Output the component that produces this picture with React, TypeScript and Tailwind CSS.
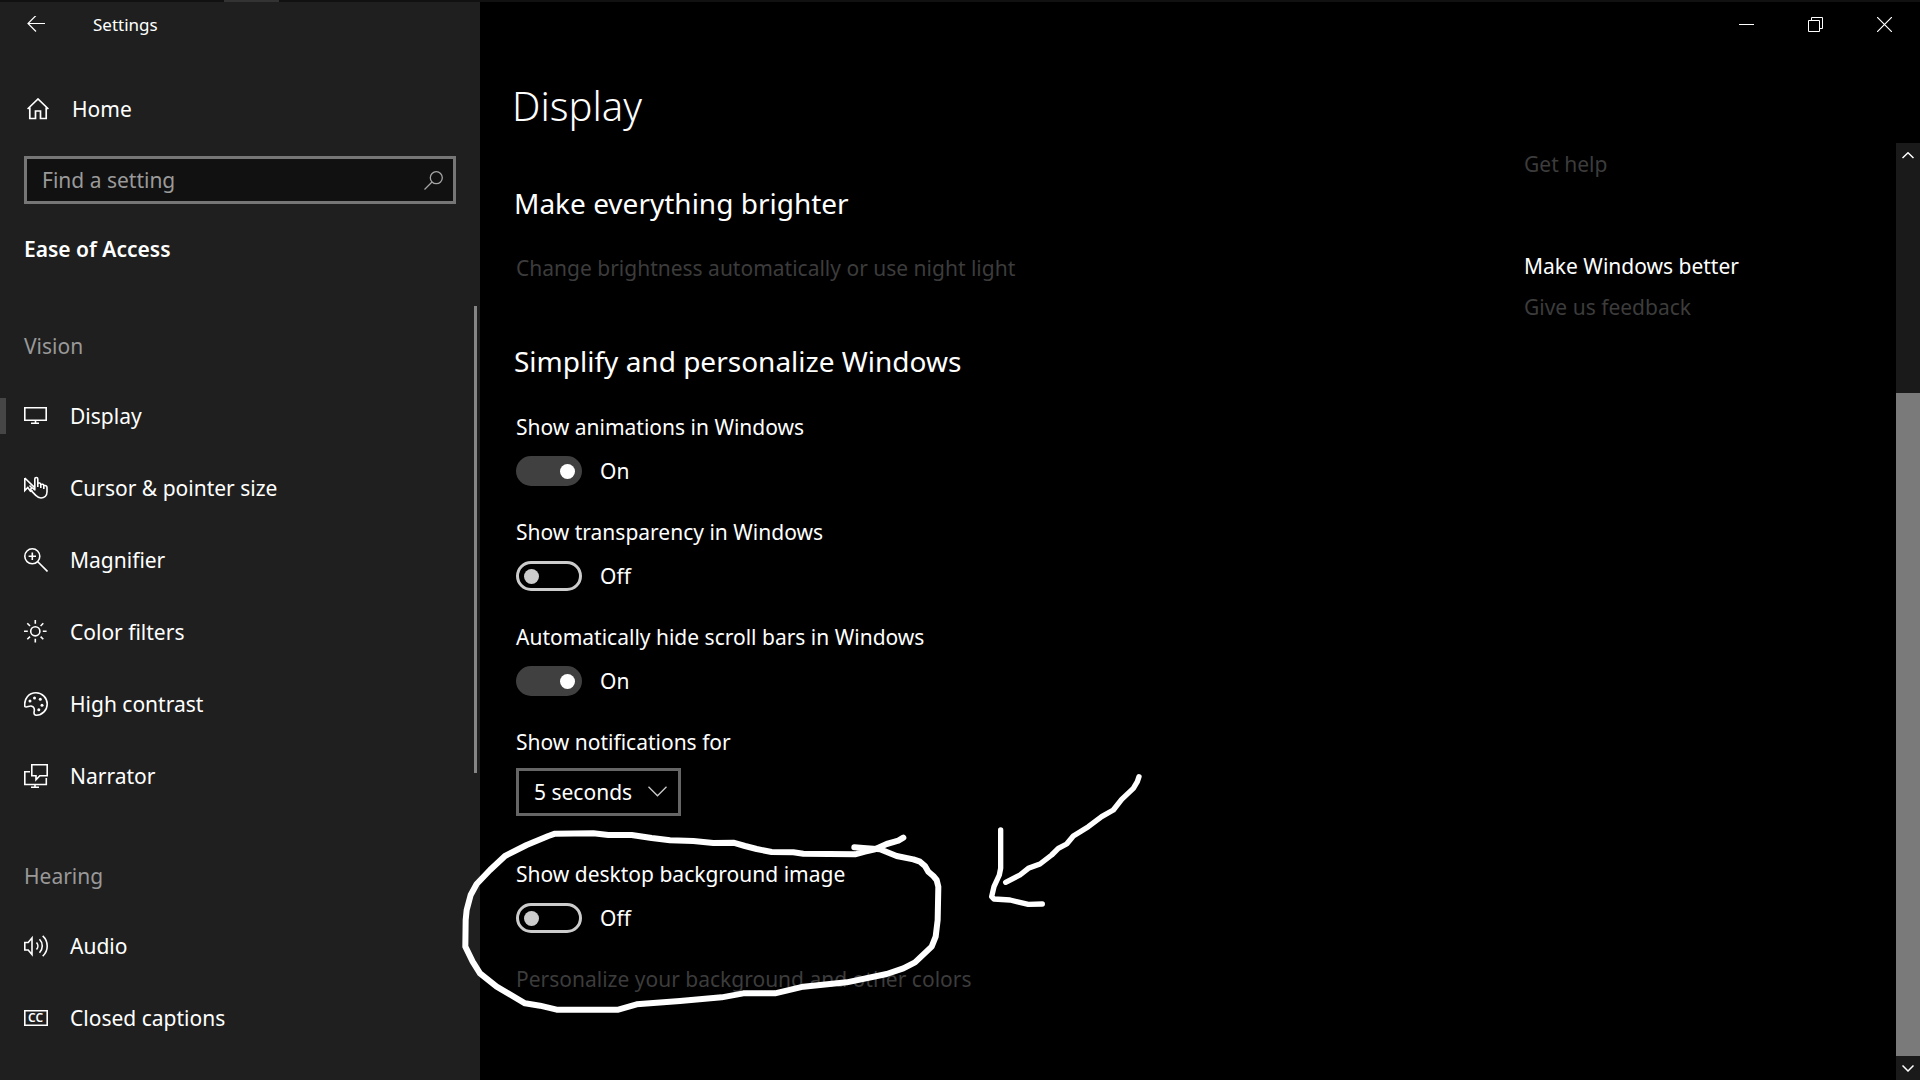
import { useState } from 'react';
import type { ReactNode } from 'react';

const icons: Record<string, ReactNode> = {
  display: (
    <>
      <path d="M.8 3.8h21.4v12.4H.8z" />
      <path d="M11.5 16v3M7 19.3h8" />
    </>
  ),
  cursor: (
    <>
      <path d="M.8 2v12.5l3-3 2.6 3.8 2-1.2M.8 2l9.6 9.4M5.5 9.5l2.8 2.8" />
      <path d="M10.8 14.5V3c0-2 3-2 3 0v8M13.8 7.5c1-.9 2.8-.6 3 .8V12M16.8 8.6c1.2-.8 2.9-.3 3 1V13M19.8 9.8c1.5-.6 3.2 0 3.2 1.8v4.2c0 4-2.8 6.2-6 6.2-2.4 0-3.8-1-5-2.4l-5-5.2c-1-1.8.8-3 2.2-2l1.6 1.5" />
    </>
  ),
  magnifier: (
    <>
      <circle cx="8.3" cy="8.3" r="7.5" />
      <path d="M13.8 13.8l9.7 9.7M8.3 4.6V12M4.6 8.3H12" />
    </>
  ),
  filters: (
    <>
      <circle cx="11.3" cy="11.3" r="4.6" />
      <path d="M11.3 0v3.8M11.3 18.8v3.8M0 11.3h3.8M18.8 11.3h3.8M3.3 3.3L6 6M16.6 16.6l2.7 2.7M19.3 3.3L16.6 6M6 16.6l-2.7 2.7" />
    </>
  ),
  contrast: (
    <>
      <path d="M.9 14.6C-.4 6.5 5 .8 12 .8c6.2 0 11.2 5 11.2 11.2S18.2 23.2 12.4 23.2c-1.9 0-2.7-1.4-2.3-3.3.6-2.7.2-5.2-2.6-5.8-2.4-.6-4.6 1.8-6.6.5z" />
      <g fill="currentColor" stroke="none">
        <circle cx="6" cy="9" r="1.5" />
        <circle cx="10.5" cy="5.9" r="1.5" />
        <circle cx="16.3" cy="7.3" r="1.5" />
        <circle cx="18" cy="13.2" r="1.5" />
        <circle cx="14.8" cy="17.8" r="1.5" />
      </g>
    </>
  ),
  narrator: (
    <>
      <path d="M7.8.8h15.4v11h-7.4L12 15.8v-4H7.8z" />
      <path d="M6 7.8H.8v12.7h21.5V14M11 20.5v3M7 23.3h8" />
    </>
  ),
  audio: (
    <>
      <path d="M.8 8.5h3.4L8 4v16.5L4.2 16H.8z" />
      <path d="M12.5 8.5c1.8 2 1.8 5 0 7M15.5 5.3c3.7 3.7 3.7 9.7 0 13.4M18.7 1.8c6 5.6 6 14.8 0 20.4" />
    </>
  ),
  captions: (
    <>
      <path d="M.8 4.8h22.4v14.5H.8z" />
      <text x="4" y="16" fontSize="12" fontWeight="600" fill="currentColor" stroke="none">
        CC
      </text>
    </>
  ),
};

const groups = [
  {
    title: 'Vision',
    items: [
      { icon: 'display', label: 'Display', active: true },
      { icon: 'cursor', label: 'Cursor & pointer size' },
      { icon: 'magnifier', label: 'Magnifier' },
      { icon: 'filters', label: 'Color filters' },
      { icon: 'contrast', label: 'High contrast' },
      { icon: 'narrator', label: 'Narrator' },
    ],
  },
  {
    title: 'Hearing',
    items: [
      { icon: 'audio', label: 'Audio' },
      { icon: 'captions', label: 'Closed captions' },
    ],
  },
];

function Sidebar() {
  return (
    <aside className="w-[480px] shrink-0 bg-[#1f1f1f] flex flex-col">
      <div className="h-[46px] flex items-center pl-[27px] gap-12">
        <button aria-label="Back">
          <svg width="18" height="18" viewBox="0 0 18 18" fill="none" stroke="currentColor" strokeWidth="1.2">
            <path d="M18 7.5H1M9 -.5l-8 8 8 8" />
          </svg>
        </button>
        <span className="text-[17px] leading-[24px]">Settings</span>
      </div>

      <a href="#home" className="mt-[46px] pl-[27px] flex items-center gap-[23px]">
        <svg width="22" height="22" viewBox="0 0 22 22" fill="none" stroke="currentColor" strokeWidth="1.7">
          <path d="M.6 11L11 1l10.4 10M2.8 9.5v11h5.7V13h5v7.5h5.7v-11" />
        </svg>
        Home
      </a>

      <div className="relative mt-8 mx-6">
        <input
          type="text"
          aria-label="Find a setting"
          placeholder="Find a setting"
          className="block w-full h-12 bg-[#111] border-3 border-[#767676] pl-[15px] pr-12 placeholder:text-[#9a9a9a] outline-none"
        />
        <svg
          className="absolute right-[13px] top-[15px] text-[#a5a5a5] pointer-events-none"
          width="19"
          height="19"
          viewBox="0 0 19 19"
          fill="none"
          stroke="currentColor"
          strokeWidth="1.3"
        >
          <circle cx="12.3" cy="6.7" r="6" />
          <path d="M8 11L.5 18.5" />
        </svg>
      </div>

      <h2 className="mt-[30px] px-6 font-semibold">Ease of Access</h2>

      <nav className="relative mt-[42px] grow">
        {groups.map((group) => (
          <div key={group.title} className="pt-[25px] not-first:pt-[49px]">
            <h3 className="px-6 mb-[19px] text-[#999]">{group.title}</h3>
            {group.items.map((item) => (
              <a
                key={item.label}
                href="#"
                className={`h-[72px] flex items-center ${item.active ? 'before:w-[6px] before:h-9 before:bg-[#464646]' : 'pl-[6px]'}`}
              >
                <svg
                  className="ml-[18px] mr-[22px]"
                  width="24"
                  height="24"
                  viewBox="0 0 24 24"
                  fill="none"
                  stroke="currentColor"
                  strokeWidth="1.6"
                  aria-hidden="true"
                >
                  {icons[item.icon]}
                </svg>
                {item.label}
              </a>
            ))}
          </div>
        ))}
        <div className="absolute right-[3px] top-0 w-[3px] h-[467px] bg-[#858585]" />
      </nav>
    </aside>
  );
}

function WindowButtons() {
  const button = 'w-[69px] h-[45px] flex items-center justify-center';
  return (
    <div className="flex justify-end pr-px">
      <button className={button} aria-label="Minimize">
        <svg width="15" height="15" fill="none" stroke="currentColor">
          <path d="M0 7.5h15" />
        </svg>
      </button>
      <button className={button} aria-label="Restore">
        <svg width="15" height="15" fill="none" stroke="currentColor">
          <path d="M.5 3.5h11v11H.5zM3.5 3.5v-3h11v11h-3" />
        </svg>
      </button>
      <button className={button} aria-label="Close">
        <svg width="15" height="15" fill="none" stroke="currentColor" strokeWidth="1.2">
          <path d="M0 0l15 15M15 0L0 15" />
        </svg>
      </button>
    </div>
  );
}

function Toggle({ id, label, initial }: { id: string; label: string; initial: boolean }) {
  const [on, setOn] = useState(initial);

  return (
    <div>
      <label htmlFor={id} className="block">
        {label}
      </label>
      <div className="mt-[14px] flex items-center gap-[18px]">
        <input
          id={id}
          type="checkbox"
          role="switch"
          checked={on}
          onChange={(e) => setOn(e.target.checked)}
          className="appearance-none w-[66px] h-[30px] rounded-full border-3 border-[#ccc] pl-[5px] pr-1 flex items-center before:size-[15px] before:rounded-full before:bg-[#ccc] checked:bg-[#404040] checked:border-[#404040] checked:justify-end checked:before:bg-white"
        />
        <span>{on ? 'On' : 'Off'}</span>
      </div>
    </div>
  );
}

// Hand-drawn circle and arrow around the background image switch
function Scribble() {
  return (
    <svg
      className="absolute left-[-66px] top-[-99px] pointer-events-none"
      width="710"
      height="265"
      viewBox="0 120 2130 795"
      fill="none"
      stroke="#fff"
      strokeWidth="18"
      strokeLinecap="round"
      strokeLinejoin="round"
      aria-hidden="true"
    >
      <path d="M1360 353L1345 362 1310 372 1275 388 1245 395 1215 403 1060 401 1030 397 965 396 920 387 885 378 850 368 790 369 730 363 660 361 605 354 545 345 475 345 430 340 315 341 295 348 230 375 165 408 120 450 80 492 62 525 50 570 47 600 46 680 68 725 90 760 140 800 225 850 270 857 320 869 505 869 560 853 690 843 815 832 880 820 975 820 1060 800 1190 787 1310 762 1360 745 1395 727 1445 680 1457 650 1463 600 1465 500 1460 480 1450 468 1435 455 1425 438 1410 425 1390 418 1340 408 1290 388 1240 384 1213 382" />
      <path
        strokeWidth="16"
        d="M2067 170L2062 185 2050 205 2015 238 1990 270 1955 290 1915 320 1870 348 1850 372 1825 385 1805 405 1770 432 1735 445 1710 465 1667 487M1652 330V445L1648 465 1632 500 1625 530 1632 537 1680 540 1735 553 1777 552"
      />
    </svg>
  );
}

function ScrollBar() {
  return (
    <div className="w-6 shrink-0 flex flex-col bg-[#1a1a1a]">
      <button className="h-6 flex items-center justify-center" aria-label="Scroll up">
        <svg width="12" height="7" fill="none" stroke="currentColor" strokeWidth="1.5">
          <path d="M.5 6L6 .8 11.5 6" />
        </svg>
      </button>
      <div className="grow-[226]" />
      <div className="grow-[663] bg-[#7a7a7a]" />
      <button className="h-6 flex items-center justify-center" aria-label="Scroll down">
        <svg width="12" height="7" fill="none" stroke="currentColor" strokeWidth="1.5">
          <path d="M.5 .5L6 6 11.5 .5" />
        </svg>
      </button>
    </div>
  );
}

export default function App() {
  return (
    <div className="min-h-screen flex flex-col bg-black text-white text-[21px] leading-[30px] font-['Noto_Sans','Open_Sans',sans-serif]">
      <div className="h-[2px] bg-[#111] pl-56">
        <div className="w-[55px] h-full bg-[#333]" />
      </div>
      <div className="grow flex">
        <Sidebar />
        <main className="relative grow flex flex-col">
          <WindowButtons />
          <h1 className="mt-[29px] mb-[7px] pl-8 text-[40px] leading-[60px] font-light">Display</h1>
          <div className="grow flex">
            <div className="grow pl-9 pt-10 pb-12">
              <h2 className="-ml-[2px] text-[28px] leading-[40px]">Make everything brighter</h2>
              <a href="#brightness" className="block mt-[30px] text-[#3c3c3c]">
                Change brightness automatically or use night light
              </a>

              <h2 className="-ml-[2px] mt-[58px] text-[28px] leading-[40px]">Simplify and personalize Windows</h2>
              <div className="mt-[31px] flex flex-col gap-[31px]">
                <Toggle id="animations" label="Show animations in Windows" initial={true} />
                <Toggle id="transparency" label="Show transparency in Windows" initial={false} />
                <Toggle id="scrollbars" label="Automatically hide scroll bars in Windows" initial={true} />
                <div>
                  <label htmlFor="notifications" className="block">
                    Show notifications for
                  </label>
                  <div className="relative w-[165px] mt-[11px] mb-3">
                    <select
                      id="notifications"
                      defaultValue="5"
                      className="appearance-none block w-full h-12 bg-black border-3 border-[#666] pl-[15px]"
                    >
                      <option value="5">5 seconds</option>
                      <option value="7">7 seconds</option>
                      <option value="15">15 seconds</option>
                      <option value="30">30 seconds</option>
                    </select>
                    <svg
                      className="absolute right-[14px] top-[18px] pointer-events-none"
                      width="19"
                      height="11"
                      fill="none"
                      stroke="#ccc"
                      strokeWidth="1.3"
                    >
                      <path d="M.5 .8l9 9 9-9" />
                    </svg>
                  </div>
                </div>
                <div className="relative">
                  <Toggle id="background" label="Show desktop background image" initial={false} />
                  <a href="#personalize" className="block mt-[31px] text-[#3c3c3c]">
                    Personalize your background and other colors
                  </a>
                  <Scribble />
                </div>
              </div>
            </div>
            <aside className="w-[372px] shrink-0 pt-[6px]">
              <a href="#help" className="block text-[#3c3c3c]">
                Get help
              </a>
              <h3 className="mt-[72px]">Make Windows better</h3>
              <a href="#feedback" className="block mt-[11px] text-[#3c3c3c]">
                Give us feedback
              </a>
            </aside>
            <ScrollBar />
          </div>
        </main>
      </div>
    </div>
  );
}
